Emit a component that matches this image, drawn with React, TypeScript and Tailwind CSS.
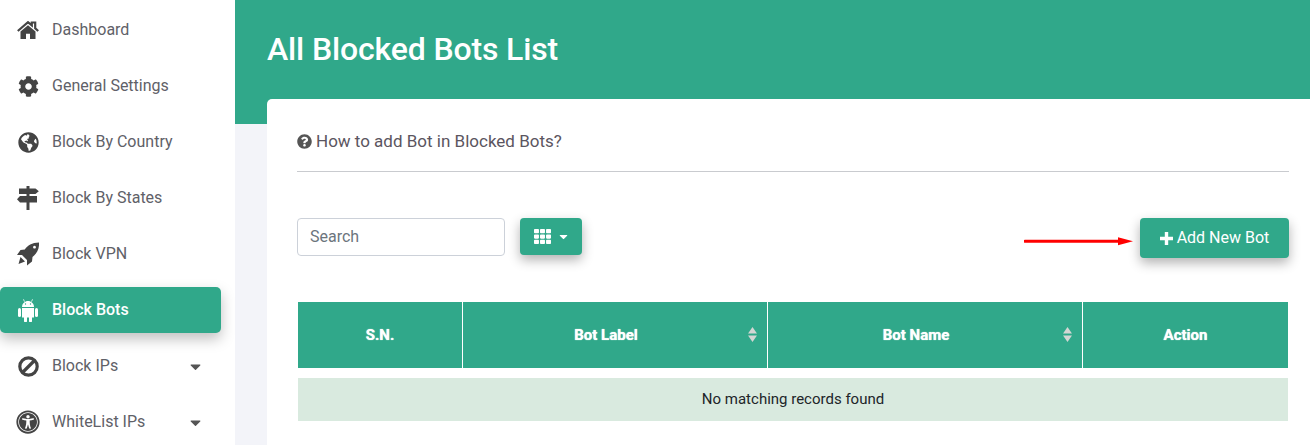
import React from 'react';
import { FaCog, FaGlobeAmericas, FaUniversalAccess, FaQuestionCircle, FaTh, FaCaretDown } from 'react-icons/fa';

// FA4 style glyphs that the icon package no longer has
const HomeIcon = () => (
  <svg width="22" height="18" viewBox="0 0 22 18" fill="#444" className="shrink-0">
    <path d="M0.800 10 11 1.200l3.800 3.200V1.500h3.400v5.700l3 2.800" fill="none" stroke="#444" strokeWidth="2.200" />
    <path d="M3.500 10.500 11 4.300l7.500 6.200V18h-5.500v-5.200H9V18H3.500z" />
  </svg>
);

const SignsIcon = () => (
  <svg width="22" height="24" viewBox="0 0 22 24" fill="#444" className="shrink-0">
    <path d="M9.500 0h3v24h-3z" />
    <path d="M2 2.500h16.500L21.800 5.200 18.500 8H2z" />
    <path d="M3 10h17v6.500H3L0 13.200z" />
  </svg>
);

const RocketIcon = () => (
  <svg width="22" height="24" viewBox="0 0 22 24" fill="#444" className="shrink-0">
    <path
      fillRule="evenodd"
      d="M22 0.500C15 0.500 10.500 3.500 7.800 7.500L3.500 8 0 13 5 13 10 18 10 23.500 15 19.500 15.500 15C20 11.500 22.500 6.500 22 0.500ZM17.500 3.800a1.400 1.400 0 1 0 0.010 0Z"
    />
    <path d="M3.500 15 8 19.500 1.500 22z" />
  </svg>
);

const AndroidIcon = () => (
  <svg width="22" height="24" viewBox="0 0 22 24" fill="#fff" className="shrink-0">
    <path d="M7.500 3.700 6.500 1.300M14.500 3.700l1-2.400" stroke="#fff" strokeWidth="0.800" />
    <path d="M5 9c0-3.500 3-6 6-6s6 2.500 6 6z" />
    <circle cx="8.500" cy="6" r="0.700" fill="#30a88a" />
    <circle cx="13.500" cy="6" r="0.700" fill="#30a88a" />
    <rect x="1" y="10" width="3" height="9" rx="1.500" />
    <rect x="18" y="10" width="3" height="9" rx="1.500" />
    <path d="M5 10h12v9.500h-2V23a1.500 1.500 0 0 1-3 0v-3.500h-2V23a1.500 1.500 0 0 1-3 0v-3.500H5z" />
  </svg>
);

const BanIcon = () => (
  <svg width="21" height="21" viewBox="0 0 21 21" fill="none" stroke="#444" strokeWidth="3.200" className="shrink-0">
    <circle cx="10.500" cy="10.500" r="8.700" />
    <path d="M4.500 16.500 16.500 4.500" />
  </svg>
);

const menu = [
  { label: 'Dashboard', icon: <HomeIcon /> },
  { label: 'General Settings', icon: <FaCog className="w-[21px] h-[21px] shrink-0 text-[#444]" /> },
  { label: 'Block By Country', icon: <FaGlobeAmericas className="w-[21px] h-[21px] shrink-0 text-[#444]" /> },
  { label: 'Block By States', icon: <SignsIcon /> },
  { label: 'Block VPN', icon: <RocketIcon /> },
  { label: 'Block Bots', icon: <AndroidIcon />, active: true },
  { label: 'Block IPs', icon: <BanIcon />, caret: true },
  { label: 'WhiteList IPs', icon: <FaUniversalAccess className="w-[24px] h-[24px] shrink-0 text-[#444]" />, caret: true },
];

const Sidebar: React.FC = () => (
  <aside className="w-[235px] shrink-0 bg-white pt-[7px] pr-[14px] flex flex-col gap-[10px]">
    {menu.map(item => (
      <div
        key={item.label}
        className={`h-[46px] shrink-0 flex items-center pr-[17px] rounded-[5px] ${item.active ? 'bg-[#30a88a] text-white font-medium shadow-[0_6px_14px_rgba(0,0,0,0.25)]' : 'text-[#5f6168]'}`}
      >
        <div className="w-[52px] pl-[17px] pr-[13px] flex justify-center shrink-0">{item.icon}</div>
        <span className="text-[16px] flex-1">{item.label}</span>
        {item.caret && <FaCaretDown className="w-[17px] h-[17px] text-[#555]" />}
      </div>
    ))}
  </aside>
);

const SortArrows = () => (
  <svg width="9" height="15" viewBox="0 0 9 15" className="absolute right-[10px] top-[25px]" fill="#d3d6d4">
    <path d="M4.500 0 9 6.500H0z" />
    <path d="M4.500 15 0 8.500h9z" />
  </svg>
);

const App: React.FC = () => (
  <div className="flex w-[1310px] h-[445px] overflow-hidden bg-[#f3f4f9] font-['Roboto',sans-serif]">
    <Sidebar />
    <main className="flex-1 min-w-0">
      <div className="h-[124px] bg-[#30a88a] pl-[32px] pt-[26px]">
        <h1 className="text-[32px] leading-[46px] font-medium tracking-[-0.15px] text-white">All Blocked Bots List</h1>
      </div>
      <div className="ml-[32px] -mt-[25px] h-[400px] bg-white rounded-tl-[5px] pl-[30px] pr-[21px]">
        <div className="h-[73px] border-b border-[#c9cbcf] flex items-start pt-[31px] text-[17px] leading-[22px] text-[#5b5560]">
          <FaQuestionCircle className="w-[15px] h-[15px] mt-[4px] mr-[4px] text-[#555]" />
          How to add Bot in Blocked Bots?
        </div>
        <div className="mt-[46px] flex items-start">
          <input
            placeholder="Search"
            className="w-[208px] h-[38px] px-[12px] pb-[2px] border border-[#ccd1d9] rounded-[4px] text-[16px] outline-none placeholder:text-[#6c757d]"
          />
          <button className="ml-[15px] w-[62px] h-[37px] pl-[2px] pb-[1px] bg-[#30a88a] rounded-[4px] text-white flex items-center justify-center shadow-[0_5px_12px_rgba(0,0,0,0.3)]">
            <FaTh className="w-[17px] h-[17px]" />
            <FaCaretDown className="ml-[6px] w-[13px] h-[13px]" />
          </button>
          <div className="relative ml-auto">
            <svg width="110" height="10" viewBox="0 0 110 10" className="absolute left-[-116px] top-[18px]">
              <path d="M1 5.300H98" stroke="#ff0000" strokeWidth="3" strokeLinecap="round" />
              <path d="M94 1.300 109 5.300 94 9.300z" fill="#ff0000" />
            </svg>
            <button className="w-[149px] h-[40px] bg-[#30a88a] rounded-[4px] text-white text-[16px] flex items-center justify-center shadow-[0_5px_12px_rgba(0,0,0,0.3)]">
              <svg width="13" height="13" viewBox="0 0 13 13" fill="#fff" className="mr-[4px] shrink-0">
                <path d="M4.800 0h3.400v4.800H13v3.400H8.200V13H4.800V8.200H0V4.800h4.800z" />
              </svg>
              Add New Bot
            </button>
          </div>
        </div>
        <div className="mt-[44px] mx-[1px] text-[15px]">
          <div className="flex h-[66px] bg-[#30a88a] text-white font-bold text-center [text-shadow:0_0_1px_#fff]">
            <div className="w-[165px] flex items-center justify-center border-r border-white">S.N.</div>
            <div className="relative w-[305px] pr-[18px] flex items-center justify-center border-r border-white">Bot Label<SortArrows /></div>
            <div className="relative w-[315px] pr-[18px] flex items-center justify-center border-r border-white">Bot Name<SortArrows /></div>
            <div className="flex-1 flex items-center justify-center">Action</div>
          </div>
          <div className="mt-[10px] h-[43px] bg-[#d9eadf] text-[#212529] flex items-center justify-center">
            No matching records found
          </div>
        </div>
      </div>
    </main>
  </div>
);

export default App;
